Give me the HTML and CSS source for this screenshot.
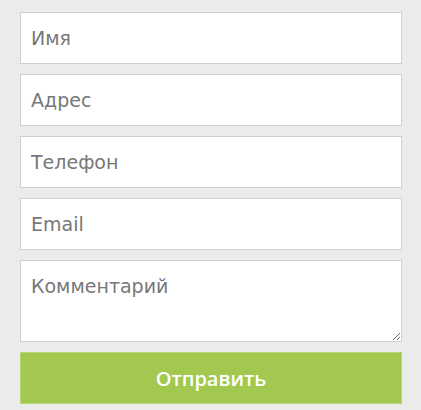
FILE: index.html
```html
<!DOCTYPE html>
<html lang="ru">
<head>
<meta charset="utf-8">
<link rel="stylesheet" href="styles.css">
</head>
<body>
<form class="form">
  <input class="field" type="text" placeholder="Имя">
  <input class="field" type="text" placeholder="Адрес">
  <input class="field" type="text" placeholder="Телефон">
  <input class="field" type="text" placeholder="Email">
  <textarea class="field area" placeholder="Комментарий"></textarea>
  <button class="submit" type="button">Отправить</button>
</form>
</body>
</html>
```
FILE: styles.css
```css
html, body {
  margin: 0;
  padding: 0;
  background: #ebebe9;
  height: 100%;
}
.form {
  display: flex;
  flex-direction: column;
  gap: 10px;
  padding: 12px 19px 0 20px;
}
.field {
  box-sizing: border-box;
  width: 382px;
  height: 52px;
  margin: 0;
  border: 1px solid #cfcfcf;
  background: #fff;
  padding: 0 10px;
  font-family: "DejaVu Sans", sans-serif;
  font-size: 19px;
  color: #777;
  outline: none;
  border-radius: 0;
}
.field::placeholder {
  color: #777;
  opacity: 1;
}
.area {
  height: 82px;
  padding-top: 14px;
  resize: vertical;
}
.submit {
  box-sizing: border-box;
  width: 382px;
  height: 52px;
  margin: 0;
  border: 1px solid #b6d479;
  background: #a2c84f;
  color: #fff;
  font-family: "Open Sans", sans-serif;
  font-size: 20px;
  font-weight: 600;
  border-radius: 0;
}
```
